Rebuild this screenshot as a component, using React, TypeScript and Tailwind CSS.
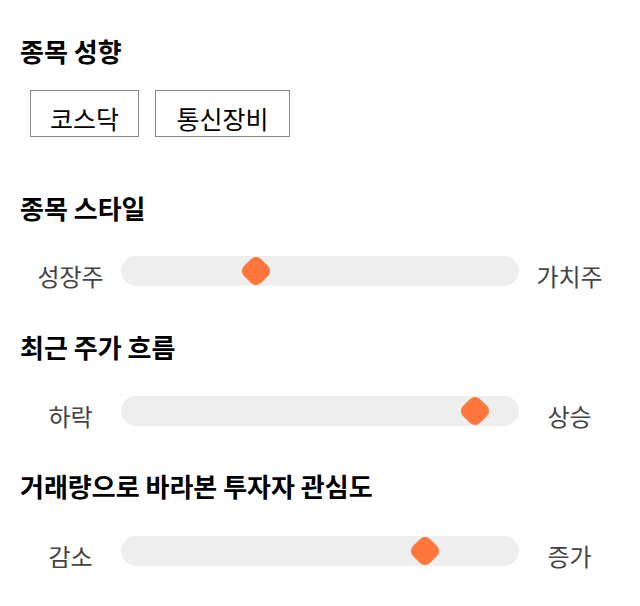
import React from "react";

const FONT = { fontFamily: '"Noto Sans CJK KR", "Noto Sans", sans-serif' };

interface SliderRowProps {
  left: string;
  right: string;
  value: number;
}

function SliderRow({ left, right, value }: SliderRowProps) {
  return (
    <div className="flex items-center h-[30px]">
      <span className="w-[101px] text-center text-[24px] leading-[30px] text-[#444] translate-y-[5px]">
        {left}
      </span>
      <div className="relative flex-1 h-[30px] rounded-full bg-[#eeeeee]">
        <div
          className="absolute top-1/2 w-[24px] h-[24px] -translate-x-1/2 -translate-y-1/2 rotate-45 rounded-[7px] bg-[#ff773d]"
          style={{ left: `${value}%` }}
        />
      </div>
      <span className="w-[101px] text-center text-[24px] leading-[30px] text-[#444] translate-y-[5px]">
        {right}
      </span>
    </div>
  );
}

function Heading({ children }: { children: React.ReactNode }) {
  return (
    <div className="h-8 leading-8 text-[26px] font-bold text-black">{children}</div>
  );
}

export default function App() {
  return (
    <div className="w-[640px] h-[606px] bg-white px-5 pt-[35px]" style={FONT}>
      {/* 종목 성향 */}
      <Heading>종목 성향</Heading>
      <div className="flex gap-4 mt-[23px] ml-[10px]">
        <span className="w-[109px] h-[47px] pt-[10px] flex items-center justify-center border border-[#888] text-[25px] text-black">
          코스닥
        </span>
        <span className="w-[135px] h-[47px] pt-[10px] flex items-center justify-center border border-[#888] text-[25px] text-black">
          통신장비
        </span>
      </div>

      <div className="mt-[55px]">
        <Heading>종목 스타일</Heading>
      </div>
      <div className="mt-8">
        <SliderRow left="성장주" right="가치주" value={34} />
      </div>

      <div className="mt-[45px]">
        <Heading>최근 주가 흐름</Heading>
      </div>
      <div className="mt-[33px]">
        <SliderRow left="하락" right="상승" value={89} />
      </div>

      <div className="mt-[44px]">
        <Heading>거래량으로 바라본 투자자 관심도</Heading>
      </div>
      <div className="mt-[34px]">
        <SliderRow left="감소" right="증가" value={76.4} />
      </div>
    </div>
  );
}
